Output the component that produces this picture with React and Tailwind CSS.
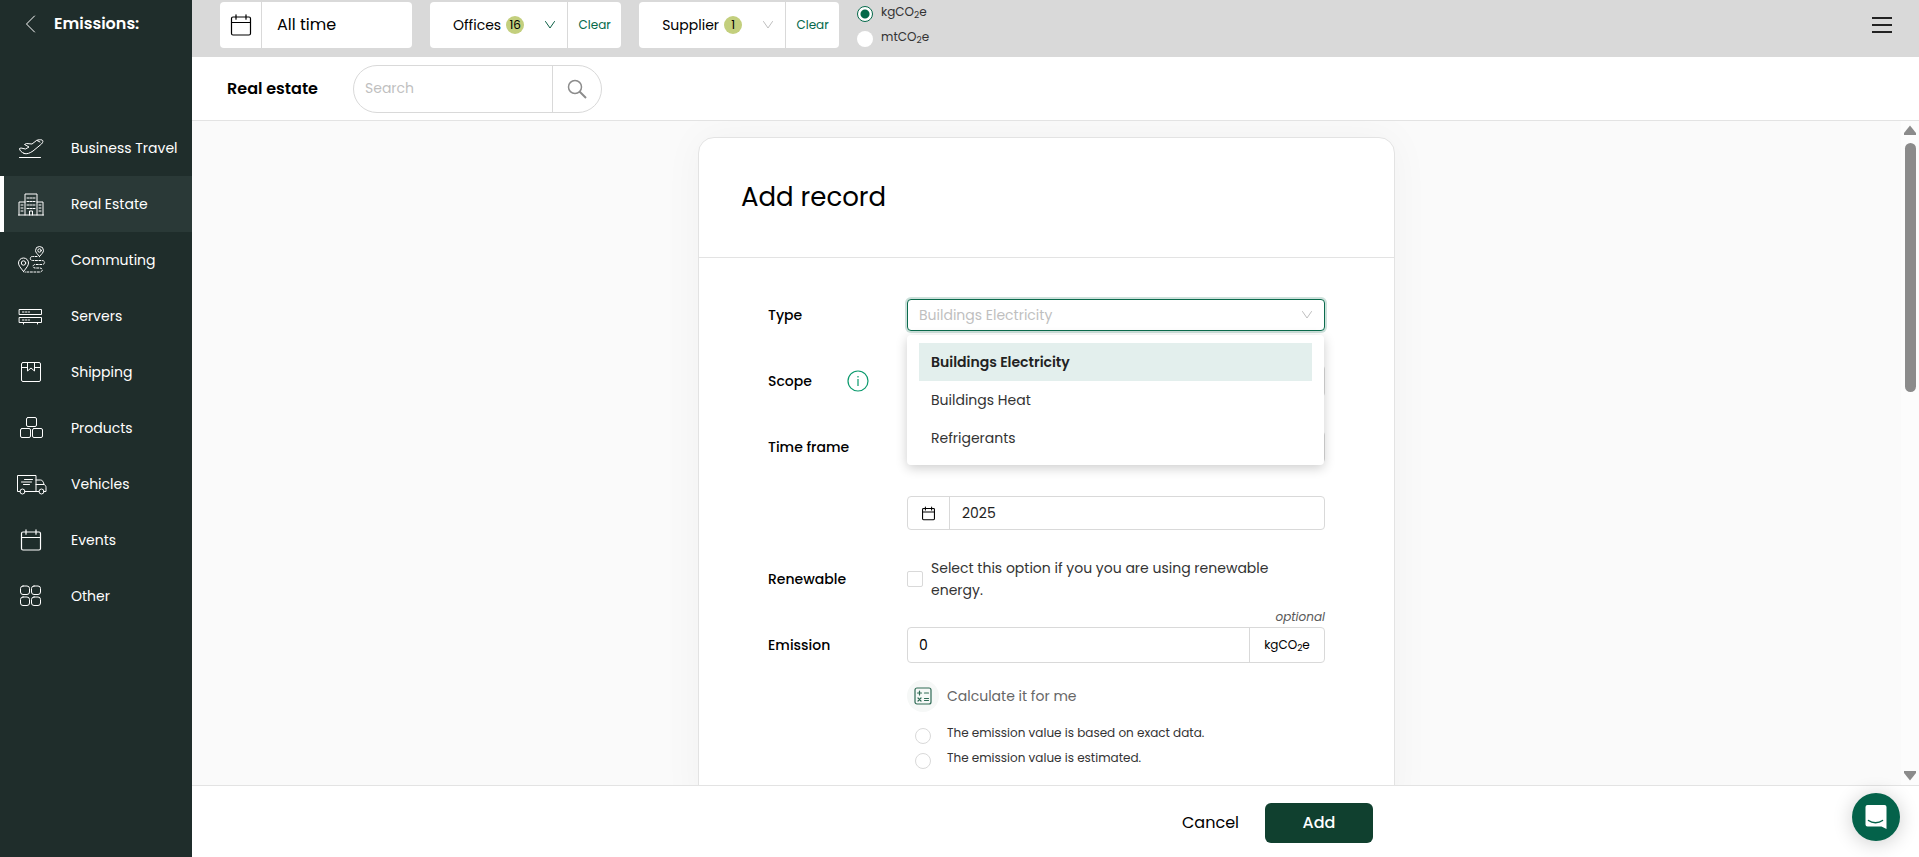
import { useState } from 'react'

const stroke = { fill: 'none', stroke: 'currentColor', strokeLinecap: 'round', strokeLinejoin: 'round' }

const CalendarIcon = ({ className, strokeWidth = 1.2 }) => (
  <svg viewBox="0 0 24 24" className={className} {...stroke} strokeWidth={strokeWidth}>
    <rect x="2.5" y="4" width="19" height="18" rx="1.5" />
    <path d="M2.5 9.5h19M7 1.8v4.4M17 1.8v4.4" />
  </svg>
)

const ChevronDown = ({ className }) => (
  <svg viewBox="0 0 12 12" className={className} {...stroke}>
    <path d="M1.5 2.5 6 9l4.5-6.5" />
  </svg>
)

const icons = {
  travel: (
    <>
      <path d="M4.5 25.5h21" />
      <path d="M9 21.500c3 1 6-.5 9-2.500l8.500-7c1.700-1.800 1.800-3.500.5-4-1.500-.5-4-.3-5.500.5L17 12l-5.500-.5-2 1 4.500 2.500-3.500 2-4.500-1-1.500.5c0 2 2 4 5 5Z" />
      <path d="M22 8.500 25 10" />
    </>
  ),
  estate: (
    <>
      <path d="M4 27V14h6M10 27V6h12v21M22 14h6v13M3.500 27h25" />
      <path d="M12 10h8M12 13.500h8M12 17h8M12 20.500h8" strokeDasharray="2 1" />
      <path d="M6 17h2M6 20h2M6 23h2M24 17h2M24 20h2M24 23h2M14.500 27v-4h3v4" />
    </>
  ),
  commuting: (
    <>
      <path d="M8.500 27.500c-3-3.800-5-6-5-8.500a5 5 0 0 1 10 0c0 2.500-2 4.700-5 8.500Z" />
      <circle cx="8.500" cy="19" r="2.200" />
      <path d="M24.500 12.500c-2-2.500-4-4-4-6a4 4 0 0 1 8 0c0 2-2 3.500-4 6Z" />
      <circle cx="24.500" cy="6.500" r="1.700" />
      <path d="M22 12.500h-4.500c-3 0-3 4 0 4H27c3.500 0 3.500 4 0 4h-7c-2.500 0-2.500 3.500 0 3.500h5c3 0 3 4 0 4H10" strokeDasharray="2 1.500" />
    </>
  ),
  servers: (
    <>
      <path d="M4.500 9.500h22v5h-22zM4.500 17.500h22v5h-22zM8.500 23v1M22.500 23v1" />
      <path d="M7.500 12h7M7.500 20h7" strokeDasharray="1.500 1.500" />
    </>
  ),
  shipping: (
    <>
      <rect x="6.500" y="6.500" width="19" height="19" rx="1.500" />
      <path d="M6.500 11.500h6M19.500 11.500h6M12.500 6.500V15l3.500-3 3.500 3V6.500" />
    </>
  ),
  products: (
    <>
      <rect x="11.500" y="5.500" width="10" height="9" rx="1.500" />
      <rect x="5.500" y="16.500" width="10" height="9" rx="1.500" />
      <rect x="17.500" y="16.500" width="10" height="9" rx="1.500" />
    </>
  ),
  vehicles: (
    <>
      <path d="M5 23.500H2.500v-16h18.500v16H10M21 12h4.500c2 0 3 2 3.500 4.500h-8M29 16.500c1.500.5 2 1.500 2 3v4h-2M24 23.500h-3" />
      <circle cx="7.500" cy="23.500" r="2.500" />
      <circle cx="26.500" cy="23.500" r="2.500" />
      <path d="M9.500 11.500h8M6.500 14h10M8.500 16.500h6" />
    </>
  ),
  other: (
    <>
      <rect x="5.500" y="6" width="9" height="8.500" rx="2.500" />
      <rect x="16.500" y="6" width="9" height="8.500" rx="2.500" />
      <rect x="5.500" y="17" width="9" height="8.500" rx="2.500" />
      <rect x="16.500" y="17" width="9" height="8.500" rx="2.500" />
    </>
  ),
}

const navItems = [
  { label: 'Business Travel', icon: 'travel' },
  { label: 'Real Estate', icon: 'estate' },
  { label: 'Commuting', icon: 'commuting' },
  { label: 'Servers', icon: 'servers' },
  { label: 'Shipping', icon: 'shipping' },
  { label: 'Products', icon: 'products' },
  { label: 'Vehicles', icon: 'vehicles' },
  { label: 'Events', icon: 'events' },
  { label: 'Other', icon: 'other' },
]

const types = ['Buildings Electricity', 'Buildings Heat', 'Refrigerants']

function Sidebar() {
  return (
    <aside className="flex w-48 shrink-0 flex-col bg-[#1f2d2b] text-white">
      <div className="mb-[72px] flex h-12 items-center gap-[18px] pl-6">
        <button aria-label="Back" className="flex">
          <svg viewBox="0 0 12 18" className="h-[18px] w-3" {...stroke}>
            <path d="M10.500 1 2.500 9l8 8" />
          </svg>
        </button>
        <h2 className="text-base font-semibold">Emissions:</h2>
      </div>
      <nav>
        {navItems.map(item => (
          <a
            key={item.label}
            href="#"
            className={
              item.label === 'Real Estate'
                ? 'flex h-14 items-center gap-6 border-l-4 border-white bg-[#2a3937] pl-[11px] text-sm'
                : 'flex h-14 items-center gap-6 border-l-4 border-transparent pl-[11px] text-sm'
            }
          >
            {item.icon === 'events' ? (
              <span className="flex w-8 pl-1">
                <CalendarIcon className="size-6" />
              </span>
            ) : (
              <svg viewBox="0 0 32 32" className="size-8" {...stroke}>
                {icons[item.icon]}
              </svg>
            )}
            <span className="whitespace-nowrap">{item.label}</span>
          </a>
        ))}
      </nav>
    </aside>
  )
}

function Filter({ label, count, active }) {
  return (
    <div className="flex h-[46px] rounded bg-white">
      <button className="flex items-center gap-[5px] pr-[11px] pl-[23px] text-sm">
        {label}
        <span className="flex size-[18px] items-center justify-center rounded-full bg-[#c3cf7d] text-xs">{count}</span>
        <ChevronDown className={active ? 'ml-[15px] size-3 text-[#0b5f45]' : 'ml-[15px] size-3 text-[#bfbfbf]'} />
      </button>
      <button className="w-[54px] border-l border-[#d9d9d9] text-xs text-[#04694a]">Clear</button>
    </div>
  )
}

function Unit() {
  return (
    <span>
      kgCO<sub>2</sub>e
    </span>
  )
}

function TopBar() {
  const [unit, setUnit] = useState('kg')
  const radio =
    'mt-1 size-4 appearance-none rounded-full bg-white checked:border checked:border-[#04694a] checked:bg-[radial-gradient(#04694a_4px,white_5px)]'

  return (
    <header className="flex h-[57px] shrink-0 items-start gap-[18px] bg-[#d9d9d9] pt-0.5 pr-[27px] pl-7">
      <button className="flex h-[46px] w-48 items-center rounded bg-white text-base">
        <span className="flex h-full w-[42px] items-center justify-center border-r border-[#d9d9d9]">
          <CalendarIcon className="size-6" />
        </span>
        <span className="pl-[15px]">All time</span>
      </button>
      <Filter label="Offices" count={16} active />
      <Filter label="Supplier" count={1} />
      <div className="flex flex-col text-xs leading-5 text-[#333]">
        <label className="flex h-[25px] items-start gap-2">
          <input type="radio" name="unit" className={radio} checked={unit === 'kg'} onChange={() => setUnit('kg')} />
          <Unit />
        </label>
        <label className="flex h-[25px] items-start gap-2">
          <input type="radio" name="unit" className={radio} checked={unit === 'mt'} onChange={() => setUnit('mt')} />
          <span>
            mtCO<sub>2</sub>e
          </span>
        </label>
      </div>
      <button aria-label="Menu" className="ml-auto flex h-[46px] items-center">
        <svg viewBox="0 0 20 18" className="h-[18px] w-5" fill="none" stroke="#222" strokeWidth="2">
          <path d="M0 2h20M0 9h20M0 16h20" />
        </svg>
      </button>
    </header>
  )
}

function SearchBar() {
  return (
    <div className="z-10 flex h-16 shrink-0 items-center border-b border-[#e3e3e3] bg-white pl-[35px]">
      <h1 className="w-[126px] text-base font-semibold">Real estate</h1>
      <div className="flex h-12 w-[249px] overflow-hidden rounded-full border border-[#d9d9d9]">
        <input
          aria-label="Search"
          placeholder="Search"
          className="min-w-0 flex-1 pb-0.5 pl-[11px] text-sm outline-none placeholder:text-[#bfbfbf]"
        />
        <button aria-label="Submit search" className="flex w-[49px] items-center justify-center border-l border-[#d9d9d9]">
          <svg viewBox="0 0 20 20" className="size-5" fill="none" stroke="#8c8c8c" strokeWidth="1.5">
            <circle cx="8" cy="8" r="6.500" />
            <path d="m12.500 12.500 6.500 6.500" strokeWidth="2" />
          </svg>
        </button>
      </div>
    </div>
  )
}

function Row({ label, htmlFor, info, children }) {
  return (
    <div className="flex h-[66px] items-center">
      <div className="flex w-[139px] shrink-0 items-center justify-between pr-[38px]">
        <label htmlFor={htmlFor} className="text-sm font-medium">
          {label}
        </label>
        {info && (
          <svg viewBox="0 0 22 22" className="size-[22px]" fill="none" stroke="#0b9a6d" strokeWidth="1.200">
            <circle cx="11" cy="11" r="10" />
            <path d="M11 9v7M11 6v1.500" />
          </svg>
        )}
      </div>
      <div className="relative flex-1">{children}</div>
    </div>
  )
}

function TypeSelect() {
  const [type, setType] = useState(types[0])

  return (
    <>
      <button
        id="type"
        type="button"
        role="combobox"
        aria-expanded="true"
        aria-controls="type-list"
        className="flex h-8 w-full items-center justify-between rounded border border-[#0b6b4d] bg-white pr-[11px] pl-[11px] text-sm text-[#bfbfbf] ring-2 ring-[#cde1db]"
      >
        {type}
        <ChevronDown className="size-3" />
      </button>
      <ul
        id="type-list"
        role="listbox"
        className="absolute top-9 right-px left-0 z-10 h-[130px] rounded bg-white px-3 py-2 text-sm text-[#333] shadow-[0_3px_12px_rgba(0,0,0,0.2)]"
      >
        {types.map(t => (
          <li
            key={t}
            role="option"
            aria-selected={t === type}
            onClick={() => setType(t)}
            className={
              t === type
                ? 'flex h-[38px] items-center bg-[#e3efed] px-3 font-semibold text-[#222]'
                : 'flex h-[38px] items-center px-3'
            }
          >
            {t}
          </li>
        ))}
      </ul>
    </>
  )
}

function RecordForm() {
  const radio =
    'mt-[6px] size-4 appearance-none rounded-full border border-[#d9d9d9] bg-white checked:border-4 checked:border-[#04694a]'

  return (
    <form className="w-[697px] shrink-0 rounded-t-2xl border border-[#e3e3e3] bg-white shadow-[0_0_40px_rgba(0,0,0,0.04)]">
      <div className="flex h-[120px] items-center border-b border-[#e3e3e3] px-[42px]">
        <h2 className="text-[26px]">Add record</h2>
      </div>
      <div className="px-[69px] pt-6">
        <Row label="Type" htmlFor="type">
          <TypeSelect />
        </Row>
        <Row label="Scope" htmlFor="scope" info>
          <select id="scope" className="block h-8 w-full appearance-none rounded border border-[#d9d9d9] bg-white" />
        </Row>
        <Row label="Time frame" htmlFor="timeframe">
          <select id="timeframe" className="block h-8 w-full appearance-none rounded border border-[#d9d9d9] bg-white" />
        </Row>
        <Row>
          <div className="flex h-[34px] rounded border border-[#d9d9d9]">
            <span className="flex w-[42px] items-center justify-center border-r border-[#d9d9d9]">
              <CalendarIcon className="size-[15px]" strokeWidth={1.7} />
            </span>
            <input aria-label="Year" defaultValue="2025" className="min-w-0 flex-1 px-3 text-sm text-[#222] outline-none" />
          </div>
        </Row>
        <Row label="Renewable" htmlFor="renewable">
          <div className="flex items-center gap-2">
            <input
              id="renewable"
              type="checkbox"
              className="size-4 shrink-0 appearance-none rounded-xs border border-[#d9d9d9] checked:bg-[#04694a]"
            />
            <label htmlFor="renewable" className="w-[350px] text-sm leading-[22px] text-[#333]">
              Select this option if you you are using renewable energy.
            </label>
          </div>
        </Row>
        <Row label="Emission" htmlFor="emission">
          <span className="absolute right-0 bottom-full text-xs leading-5 text-[#595959] italic">optional</span>
          <div className="flex h-9 rounded border border-[#d9d9d9]">
            <input id="emission" defaultValue="0" className="min-w-0 flex-1 px-[11px] text-sm outline-none" />
            <span className="flex w-[75px] items-center justify-center border-l border-[#d9d9d9] text-xs">
              <Unit />
            </span>
          </div>
        </Row>
        <div className="flex flex-col pb-10 pl-[139px]">
          <button type="button" className="mt-[2px] mb-2 flex items-center gap-2 text-sm text-[#666]">
            <span className="flex size-8 items-center justify-center rounded-full bg-[#f6f8f7]">
              <svg viewBox="0 0 18 18" className="size-[18px] text-[#2f6b55]" {...stroke} strokeWidth="1.200">
                <rect x="1" y="1" width="16" height="16" rx="2" />
                <path d="M3.500 6h4M5.500 4v4M10.500 6h4M4 11l3 3M7 11l-3 3M10.500 11.500h4M10.500 13.500h4" />
              </svg>
            </span>
            Calculate it for me
          </button>
          <label className="flex h-[25px] items-center gap-4 pl-2 text-xs text-[#333]">
            <input type="radio" name="quality" className={radio} />
            The emission value is based on exact data.
          </label>
          <label className="flex h-[25px] items-center gap-4 pl-2 text-xs text-[#333]">
            <input type="radio" name="quality" className={radio} />
            The emission value is estimated.
          </label>
        </div>
      </div>
    </form>
  )
}

function ScrollBar() {
  return (
    <div className="flex w-[18px] shrink-0 flex-col items-center bg-[#fcfcfc] pt-1 pb-1">
      <svg viewBox="0 0 12 10" className="h-[10px] w-3" fill="#8b8b8b">
        <path d="M6 0.500 12 8v2H0V8Z" />
      </svg>
      <div className="mt-2 h-[38%] w-[11px] rounded-full bg-[#8b8b8b]" />
      <svg viewBox="0 0 12 10" className="mt-auto h-[10px] w-3" fill="#8b8b8b">
        <path d="M6 9.500 12 2V0H0v2Z" />
      </svg>
    </div>
  )
}

export default function App() {
  return (
    <div className="flex h-screen overflow-hidden bg-white font-['Poppins','Inter',sans-serif] text-black">
      <Sidebar />
      <div className="flex min-w-0 flex-1 flex-col">
        <TopBar />
        <SearchBar />
        <main className="flex min-h-0 flex-1 overflow-hidden bg-[#fafafa]">
          <div className="flex flex-1 items-start justify-center overflow-hidden pt-4">
            <RecordForm />
          </div>
          <ScrollBar />
        </main>
        <footer className="flex h-[72px] shrink-0 items-center justify-center border-t border-[#e3e3e3] pt-0.5">
          <div className="flex w-[635px] items-center justify-end gap-[26px]">
            <button className="text-base">Cancel</button>
            <button className="h-10 w-[108px] rounded-md bg-[#10402f] text-base font-medium text-white">Add</button>
          </div>
        </footer>
      </div>
      <button
        aria-label="Open chat"
        className="fixed right-[19px] bottom-4 flex size-12 items-center justify-center rounded-full bg-[#04624a] shadow-[0_2px_20px_rgba(0,0,0,0.2)]"
      >
        <svg viewBox="0 0 24 26" className="h-[26px] w-6">
          <path d="M3.500 1h17a2 2 0 0 1 2 2v22l-5-2.500h-14a2 2 0 0 1-2-2V3a2 2 0 0 1 2-2Z" fill="white" />
          <path d="M4.500 16.500c4 3 10 3 14 0" fill="none" stroke="#04624a" strokeWidth="1.500" strokeLinecap="round" />
        </svg>
      </button>
    </div>
  )
}
